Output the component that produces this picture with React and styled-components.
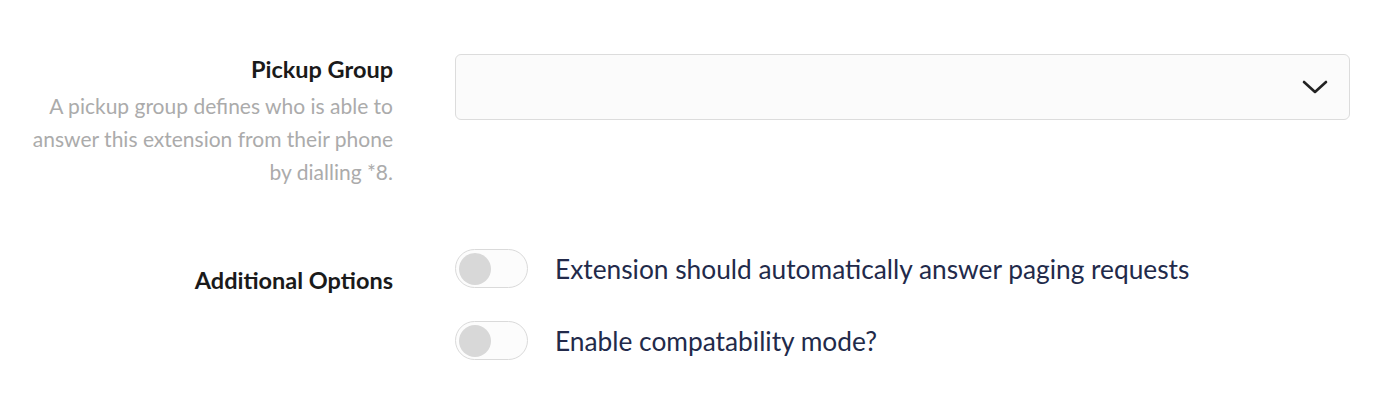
import * as React from "react";
import styled, { createGlobalStyle } from "styled-components";

const GlobalStyle = createGlobalStyle`
  html, body {
    margin: 0;
    background: #ffffff;
  }
  body {
    font-family: Lato, "Noto Sans", "Liberation Sans", sans-serif;
  }
`;

const Form = styled.div`
  display: flex;
  flex-direction: column;
  gap: 61px;
  padding: 54px 50px 0 30px;
`;

const Row = styled.div`
  display: grid;
  grid-template-columns: 363px 1fr;
  column-gap: 62px;
  align-items: start;
`;

const LabelCol = styled.div`
  text-align: right;
`;

const Label = styled.div`
  font-size: 23.5px;
  font-weight: 700;
  color: #1a1a1a;
  line-height: 30px;
  margin-top: ${(p) => p.$top || 0}px;
`;

const Help = styled.p`
  margin: 5px 0 0;
  font-size: 21px;
  line-height: 33px;
  color: #ababab;
`;

const Select = styled.div`
  height: 66px;
  box-sizing: border-box;
  border: 1px solid #dcdcdc;
  border-radius: 6px;
  background: #fbfbfb;
  display: flex;
  align-items: center;
  justify-content: flex-end;
  padding-right: 21px;
  color: #222;
`;

const Options = styled.div`
  display: flex;
  flex-direction: column;
  gap: 33px;
`;

const Option = styled.label`
  display: flex;
  align-items: center;
  gap: 27px;
`;

const Track = styled.span`
  width: 73px;
  height: 39px;
  box-sizing: border-box;
  border: 1px solid #dadada;
  border-radius: 20px;
  background: #fcfcfc;
  display: flex;
  align-items: center;
  padding-left: 3px;
  flex-shrink: 0;
`;

const Knob = styled.span`
  width: 32px;
  height: 32px;
  border-radius: 50%;
  background: #d8d8d8;
`;

const OptionText = styled.span`
  font-size: 26.3px;
  color: #222a4a;
`;

const Chevron = () => (
  <svg width="26" height="16" viewBox="0 0 26 16" fill="none">
    <path d="M2 3l11 10L24 3" stroke="currentColor" strokeWidth="2.6" strokeLinecap="round" strokeLinejoin="round" />
  </svg>
);

const options = [
  "Extension should automatically answer paging requests",
  "Enable compatability mode?",
];

export default function App() {
  return (
    <>
      <GlobalStyle />
      <Form>
        <Row>
          <LabelCol>
            <Label>Pickup Group</Label>
            <Help>
              A pickup group defines who is able to<br />
              answer this extension from their phone<br />
              by dialling *8.
            </Help>
          </LabelCol>
          <Select>
            <Chevron />
          </Select>
        </Row>
        <Row>
          <LabelCol>
            <Label $top={16}>Additional Options</Label>
          </LabelCol>
          <Options>
            {options.map((text) => (
              <Option key={text}>
                <Track>
                  <Knob />
                </Track>
                <OptionText>{text}</OptionText>
              </Option>
            ))}
          </Options>
        </Row>
      </Form>
    </>
  );
}
